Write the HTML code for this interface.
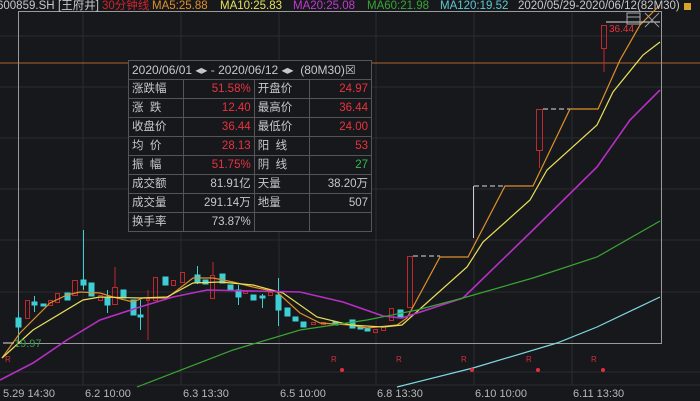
<!DOCTYPE html>
<html><head><meta charset="utf-8"><style>
html,body{margin:0;padding:0;background:#17181c;width:700px;height:401px;overflow:hidden}
body{position:relative;font-family:"Liberation Sans","Noto Sans CJK SC",sans-serif}
.h{position:absolute;top:-1px;font-size:11.5px;white-space:nowrap;line-height:14px}
.t{position:absolute;top:388px;font-size:11px;color:#b8b8b8;white-space:nowrap}
table{position:absolute;left:128px;top:60px;width:244px;border-collapse:collapse;background:#17181c;font-size:11.5px;color:#c8c8c8}
td{border:1px solid #555;height:18px;padding:0 3px;line-height:18px;white-space:nowrap}
td.r{text-align:right}
.red{color:#e8333c}.grn{color:#2fbf4a}
</style></head><body>
<svg width="700" height="401" style="position:absolute;left:0;top:0">
<g stroke="#2a2c31" stroke-width="1">
<line x1="83" y1="11" x2="83" y2="385"/><line x1="181" y1="11" x2="181" y2="385"/><line x1="279" y1="11" x2="279" y2="385"/><line x1="376" y1="11" x2="376" y2="385"/><line x1="474" y1="11" x2="474" y2="385"/><line x1="572" y1="11" x2="572" y2="385"/>
<line x1="0" y1="36" x2="700" y2="36"/><line x1="0" y1="87" x2="700" y2="87"/><line x1="0" y1="138" x2="700" y2="138"/><line x1="0" y1="189" x2="700" y2="189"/><line x1="0" y1="240" x2="700" y2="240"/><line x1="0" y1="292" x2="700" y2="292"/><line x1="0" y1="372" x2="700" y2="372"/><line x1="0" y1="385" x2="700" y2="385"/>
</g>
<line x1="0" y1="63" x2="700" y2="63" stroke="#b0652a" stroke-width="1"/>
<rect x="18.5" y="11.5" width="643" height="332" fill="none" stroke="#9a9a9a" stroke-width="1"/>
<g stroke-width="1">
<g fill="#3ecfd6" stroke="#3ecfd6">
<rect x="16" y="318" width="5" height="9"/><line x1="18.5" y1="312" x2="18.5" y2="340"/>
<rect x="32" y="302" width="5" height="3"/><line x1="34.5" y1="296" x2="34.5" y2="312"/>
<rect x="41" y="304" width="5" height="2"/>
<rect x="65" y="293" width="5" height="7"/>
<rect x="81" y="280" width="5" height="5"/><line x1="83.5" y1="230" x2="83.5" y2="290"/>
<rect x="89" y="283" width="5" height="13"/>
<rect x="105" y="297" width="5" height="8"/><line x1="107.5" y1="290" x2="107.5" y2="313"/>
<rect x="121" y="290" width="5" height="8"/>
<rect x="131" y="300" width="5" height="15"/><line x1="140.5" y1="300" x2="140.5" y2="330"/><rect x="138" y="315" width="5" height="2"/>
<rect x="163" y="277" width="5" height="8"/>
<rect x="195" y="275" width="5" height="7"/><line x1="197.5" y1="266" x2="197.5" y2="284"/>
<rect x="203" y="280" width="5" height="4"/>
<rect x="220" y="274" width="5" height="9"/>
<rect x="228" y="285" width="5" height="5"/>
<rect x="236" y="290" width="5" height="7"/><line x1="238.5" y1="285" x2="238.5" y2="305"/>
<rect x="251" y="295" width="5" height="5"/>
<rect x="260" y="296" width="5" height="2"/><line x1="262.5" y1="294" x2="262.5" y2="308"/>
<rect x="276" y="295" width="5" height="15"/><line x1="278.5" y1="278" x2="278.5" y2="326"/>
<rect x="285" y="308" width="5" height="8"/>
<rect x="293" y="317" width="5" height="4"/>
<rect x="301" y="322" width="5" height="5"/>
<rect x="333" y="322" width="5" height="3"/>
<rect x="350" y="320" width="5" height="8"/>
<rect x="358" y="327" width="5" height="2"/>
<rect x="365" y="329" width="5" height="2"/>
<rect x="398" y="310" width="5" height="8"/>
</g>
<g fill="none" stroke="#c0282f">
<rect x="25.5" y="300.5" width="4" height="18"/>
<rect x="48.5" y="300.5" width="4" height="5"/>
<rect x="55.5" y="293.5" width="4" height="9"/>
<rect x="72.5" y="280.5" width="5" height="15"/>
<rect x="98.5" y="295.5" width="4" height="5"/>
<rect x="112.5" y="287.5" width="5" height="17"/><line x1="115" y1="267" x2="115" y2="287"/>
<line x1="148" y1="290" x2="148" y2="340"/><rect x="146.5" y="298.5" width="3" height="2"/>
<rect x="153.5" y="277.5" width="4" height="23"/>
<rect x="171.5" y="280.5" width="4" height="5"/>
<rect x="180.5" y="272.5" width="4" height="10"/>
<rect x="210.5" y="275.5" width="4" height="23"/><line x1="213" y1="262" x2="213" y2="275"/>
<rect x="243.5" y="291.5" width="4" height="2"/>
<rect x="268.5" y="292.5" width="4" height="3"/>
<rect x="311.5" y="322.5" width="4" height="2"/>
<rect x="321.5" y="322.5" width="4" height="2"/>
<rect x="373.5" y="329.5" width="4" height="3"/>
<rect x="381.5" y="326.5" width="4" height="4"/>
<rect x="389.5" y="308.5" width="4" height="12"/>
<rect x="407.5" y="256.5" width="5" height="51"/>
<rect x="536.5" y="109.5" width="6" height="41"/><line x1="539.5" y1="150" x2="539.5" y2="168"/>
<rect x="601.5" y="25.5" width="5" height="23"/><line x1="604" y1="48" x2="604" y2="72"/>
</g>
<line x1="473.5" y1="186" x2="473.5" y2="238" stroke="#ccc"/>
<g stroke="#ddd" stroke-dasharray="5,3"><line x1="413" y1="256" x2="440" y2="256"/><line x1="474" y1="186" x2="505" y2="186"/><line x1="543" y1="109" x2="570" y2="109"/><line x1="607" y1="22" x2="633" y2="22"/></g>
</g>
<g fill="none" stroke-width="1.2">
<polyline stroke="#e0902a" points="2,358 20,333 50,303 67,295 80,292 100,293 113,297 133,302 143,298 167,298 193,278 213,278 233,282 253,287 277,292 300,313 320,323 350,325 367,328 397,325 407,318 440,257 468,257 505,186 533,186 570,109 598,109 620,60 640,25 660,5"/>
<polyline stroke="#e8e05a" points="2,358 33,330 83,300 100,297 140,298 167,297 193,283 220,282 253,285 283,293 317,317 350,325 383,327 402,325 467,267 483,242 530,200 547,170 597,125 613,92 643,55 660,42"/>
<polyline stroke="#b62fc4" stroke-width="1.6" points="0,380 33,363 67,340 100,320 140,307 173,297 207,290 300,292 343,302 383,316 402,318 463,298 533,230 597,167 630,120 660,90"/>
<polyline stroke="#3aa534" points="137,387 233,350 300,330 367,320 417,310 463,298 533,278 597,257 660,221"/>
<polyline stroke="#7fd8e0" points="397,387 473,368 557,343 597,327 660,297"/>
</g>
<text x="14" y="347" font-size="11" fill="#3a9a4a" font-family="Liberation Sans">19.97</text>
<line x1="3" y1="343" x2="14" y2="343" stroke="#ddd"/>
<text x="609" y="32" font-size="10" fill="#e8333c" font-family="Liberation Sans">36.44</text>
<line x1="606" y1="22" x2="660" y2="22" stroke="#ddd"/>
<rect x="627" y="13" width="13" height="11" fill="none" stroke="#aaa"/><line x1="627" y1="17" x2="640" y2="17" stroke="#aaa"/>
<path d="M645 13 L659 27 M659 13 L645 27" stroke="#999"/>
<g fill="#d0303a" font-size="8" font-family="Liberation Sans"><text x="5" y="362">R</text><text x="331" y="362">R</text><text x="396" y="362">R</text><text x="461" y="362">R</text><text x="526" y="362">R</text><text x="591" y="362">R</text></g>
<g fill="#e0303a"><circle cx="342" cy="370" r="2"/><circle cx="472" cy="370" r="2"/><circle cx="538" cy="370" r="2"/><circle cx="603" cy="370" r="2"/></g>
<rect x="684" y="3" width="7" height="7" fill="#d9a32a"/>
</svg>
<div class="h" style="left:-3px;color:#c8c8c8">600859.SH</div>
<div class="h" style="left:58px;color:#c8c8c8">[王府井]</div>
<div class="h" style="left:102px;color:#d0242c">30分钟线</div>
<div class="h" style="left:152px;color:#e0902a">MA5:25.88</div>
<div class="h" style="left:220px;color:#e8e05a">MA10:25.83</div>
<div class="h" style="left:293px;color:#c23ad0">MA20:25.08</div>
<div class="h" style="left:367px;color:#3aa534">MA60:21.98</div>
<div class="h" style="left:440px;color:#5cc8d0">MA120:19.52</div>
<div class="h" style="left:518px;color:#c8c8c8">2020/05/29-2020/06/12(82M30)</div>
<table>
<tr><td colspan="4" style="font-size:12px">2020/06/01 ◂▸ - 2020/06/12 ◂▸ &nbsp;(80M30)☒</td></tr>
<tr><td>涨跌幅</td><td class="r red">51.58%</td><td>开盘价</td><td class="r red">24.97</td></tr>
<tr><td>涨&nbsp;&nbsp;跌</td><td class="r red">12.40</td><td>最高价</td><td class="r red">36.44</td></tr>
<tr><td>收盘价</td><td class="r red">36.44</td><td>最低价</td><td class="r red">24.00</td></tr>
<tr><td>均&nbsp;&nbsp;价</td><td class="r red">28.13</td><td>阳&nbsp;&nbsp;线</td><td class="r red">53</td></tr>
<tr><td>振&nbsp;&nbsp;幅</td><td class="r red">51.75%</td><td>阴&nbsp;&nbsp;线</td><td class="r grn">27</td></tr>
<tr><td>成交额</td><td class="r">81.91亿</td><td>天量</td><td class="r">38.20万</td></tr>
<tr><td>成交量</td><td class="r">291.14万</td><td>地量</td><td class="r">507</td></tr>
<tr><td>换手率</td><td class="r">73.87%</td><td></td><td></td></tr>
</table>
<div class="t" style="left:3px">5.29 14:30</div>
<div class="t" style="left:85px">6.2 10:00</div>
<div class="t" style="left:183px">6.3 13:30</div>
<div class="t" style="left:280px">6.5 10:00</div>
<div class="t" style="left:377px">6.8 13:30</div>
<div class="t" style="left:475px">6.10 10:00</div>
<div class="t" style="left:573px">6.11 13:30</div>
</body></html>
